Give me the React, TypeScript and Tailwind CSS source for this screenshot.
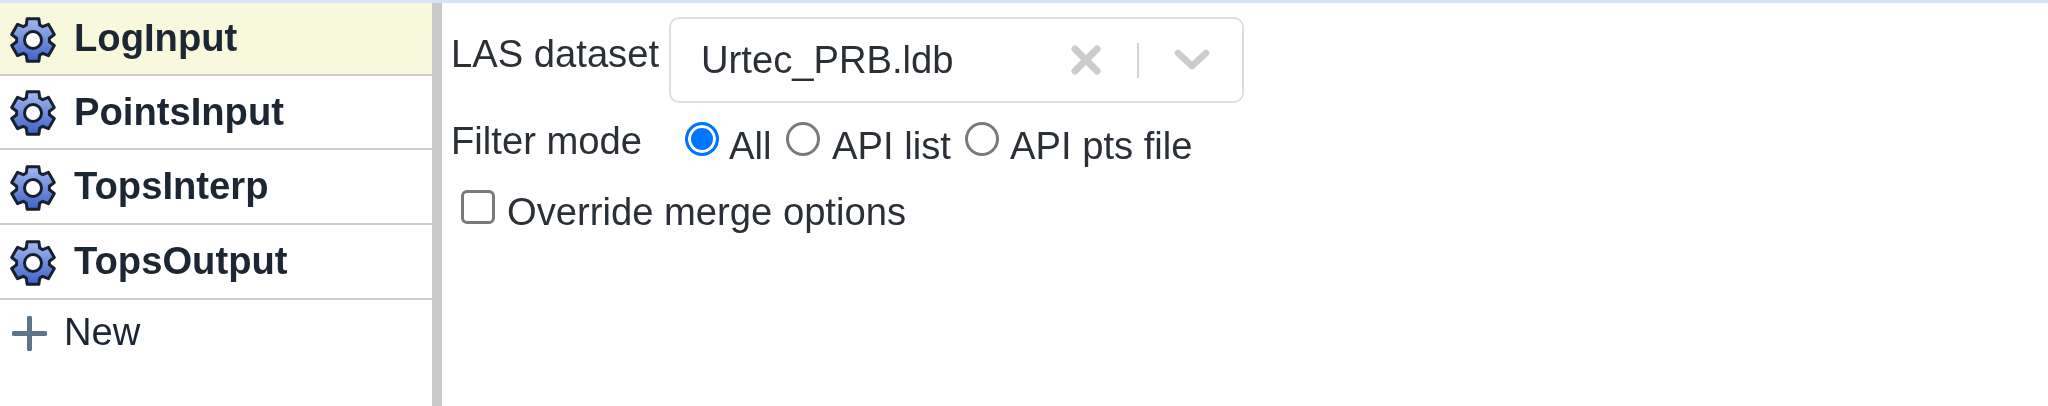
const rows = [
  { name: 'LogInput', cls: 'h-[73px] bg-[#f8f8dc]' },
  { name: 'PointsInput', cls: 'h-[74px]' },
  { name: 'TopsInterp', cls: 'h-[75px]' },
  { name: 'TopsOutput', cls: 'h-[75px]' },
]

// six tooth gear outline, tooth on top
function gearPath(cx: number, cy: number) {
  const pts: string[] = []
  for (let i = 0; i < 6; i++) {
    const a = (i * Math.PI) / 3 - Math.PI / 2
    const offs = [
      [-0.42, 16.5],
      [-0.27, 22],
      [0.27, 22],
      [0.42, 16.5],
    ]
    for (const [d, r] of offs) {
      pts.push(`${(cx + Math.cos(a + d) * r).toFixed(2)} ${(cy + Math.sin(a + d) * r).toFixed(2)}`)
    }
  }
  return 'M' + pts.join('L') + 'Z'
}

function Gear() {
  return (
    <svg width="48" height="50" viewBox="0 0 48 50" className="shrink-0 mt-[2px]">
      <defs>
        <linearGradient id="gearFill" x1="0" y1="0" x2="0" y2="1">
          <stop offset="0" stopColor="#a3b8ee" />
          <stop offset="1" stopColor="#3d62c9" />
        </linearGradient>
      </defs>
      <path d={gearPath(24, 25)} fill="url(#gearFill)" stroke="#16202e" strokeWidth="3" strokeLinejoin="round" />
      <circle cx="24" cy="25" r="8.5" fill="#fff" stroke="#16202e" strokeWidth="3" />
    </svg>
  )
}

function Radio({ checked }: { checked?: boolean }) {
  return (
    <input
      type="radio"
      name="mode"
      defaultChecked={checked}
      className="appearance-none w-[34px] h-[34px] shrink-0 rounded-full border-[3px] border-[#7a7a7a] bg-white checked:border-[#0075ff] checked:bg-[#0075ff] checked:shadow-[inset_0_0_0_3px_#fff]"
    />
  )
}

export default function App() {
  return (
    <div className="h-[406px] bg-white font-['Liberation_Sans',Arial,sans-serif] text-[38.2px] leading-none text-[#2b2f36] blur-[0.6px] overflow-hidden">
      <div className="h-[3px] bg-[#d8e3f6]"></div>
      <div className="flex h-[403px]">
        <div className="w-[442px] shrink-0 border-r-[10px] border-[#c9c9c9]">
          {rows.map((r) => (
            <div key={r.name} className={`flex items-center pl-[9px] gap-[17px] border-b-2 border-[#cdcdcd] font-bold text-[#1d2733] ${r.cls}`}>
              <Gear />
              <span>{r.name}</span>
            </div>
          ))}
          <div className="flex items-start pl-[12px] gap-[17px] pt-[13px]">
            <svg width="35" height="35" viewBox="0 0 35 35" className="shrink-0 mt-[3px]">
              <path d="M17.5 2V33M2 17.5H33" stroke="#5f7389" strokeWidth="5" strokeLinecap="round" />
            </svg>
            <span className="text-[#1d2733]">New</span>
          </div>
        </div>

        <div className="flex-1 pl-[9px]">
          <div className="flex items-start pt-[14px]">
            <span className="mt-[18px] w-[218px]">LAS dataset</span>
            <div className="flex items-center w-[575px] h-[86px] pl-[30px] border-2 border-[#dedede] rounded-[10px]">
              <span className="w-[370px]">Urtec_PRB.ldb</span>
              <svg width="30" height="30" viewBox="0 0 30 30" className="shrink-0">
                <path d="M4 4L26 26M26 4L4 26" stroke="#cccccc" strokeWidth="7" strokeLinecap="round" />
              </svg>
              <div className="w-[2px] h-[35px] bg-[#d4d4d4] ml-[36px]"></div>
              <svg width="36" height="22" viewBox="0 0 36 22" className="shrink-0 ml-[35px]">
                <path d="M4 4L18 17L32 4" fill="none" stroke="#cccccc" strokeWidth="6.5" strokeLinecap="round" strokeLinejoin="round" />
              </svg>
            </div>
          </div>

          <div className="flex items-start mt-[19px]">
            <span className="w-[234px]">Filter mode</span>
            <Radio checked />
            <span className="mt-[5px] ml-[10px] w-[57px]">All</span>
            <Radio />
            <span className="mt-[5px] ml-[12px] w-[133px]">API list</span>
            <Radio />
            <span className="mt-[5px] ml-[11px]">API pts file</span>
          </div>

          <div className="flex items-start mt-[25px] pl-[10px]">
            <input
              type="checkbox"
              className="appearance-none w-[34px] h-[34px] shrink-0 rounded-[6px] border-[3px] border-[#7a7a7a] bg-white"
            />
            <span className="mt-[3px] ml-[12px]">Override merge options</span>
          </div>
        </div>
      </div>
    </div>
  )
}
